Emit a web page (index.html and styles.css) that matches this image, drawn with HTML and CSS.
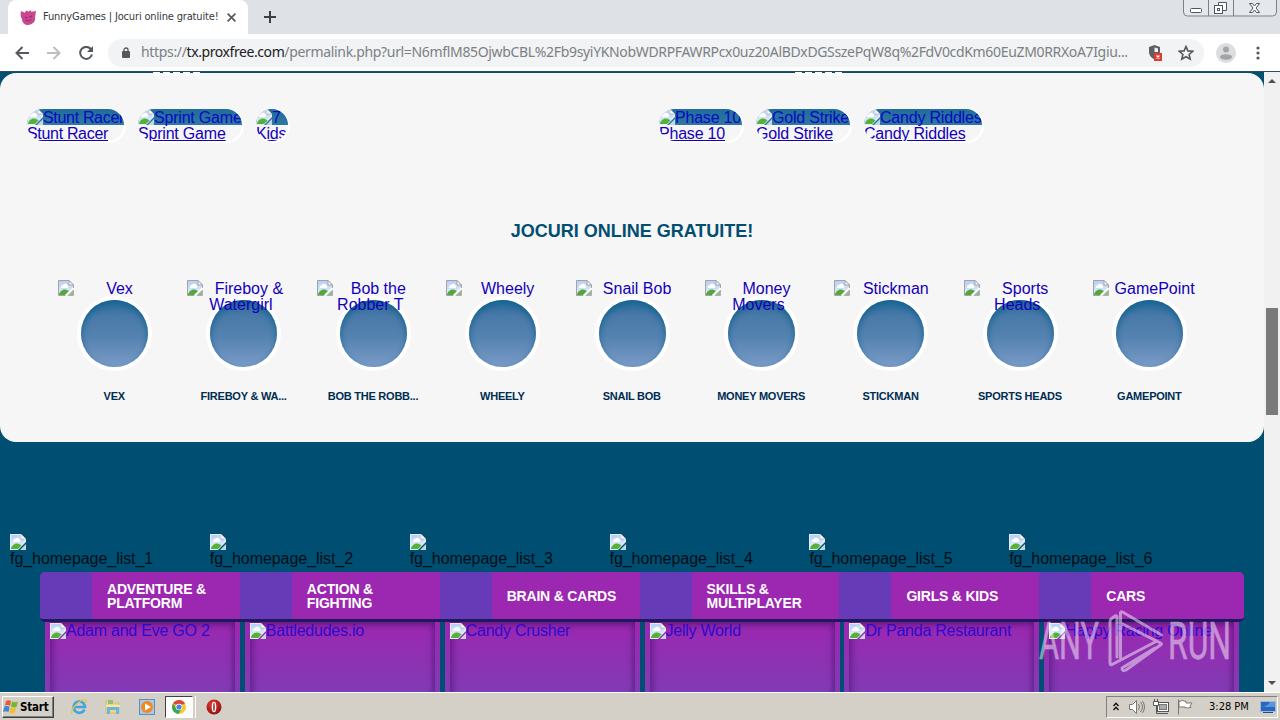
FILE: index.html
```html
<!DOCTYPE html>
<html lang="ro">
<head>
<meta charset="utf-8">
<title>FunnyGames | Jocuri online gratuite!</title>
<link rel="stylesheet" href="styles.css">
</head>
<body>
<svg class="defs" width="0" height="0" aria-hidden="true">
  <linearGradient id="sky" x1="0" y1="0" x2="0" y2="1"><stop offset="0" stop-color="#b6cff5"/><stop offset="1" stop-color="#e6f0fc"/></linearGradient>
  <radialGradient id="red" cx=".4" cy=".3" r=".8"><stop offset="0" stop-color="#e33a30"/><stop offset="1" stop-color="#880d0d"/></radialGradient>
  <symbol id="broken" viewBox="0 0 16 16">
    <path d="M.5.5H11l4.500 4.500V8L7.500 15.500H.5z" fill="url(#sky)" stroke="#a3a3a3"/>
    <path d="M11 .5V5h4.500z" fill="#fff" stroke="#a3a3a3"/>
    <path d="M3 7a2 2 0 0 1 2-2 2.500 2.500 0 0 1 4.500.5A1.500 1.500 0 0 1 9.500 8H3z" fill="#fff"/>
    <path d="M1 15c0-3 3-5.500 6-5.500 2 0 3.500 1 4 2L8 15z" fill="#54a83a"/>
    <path d="M15.500 10v5.500H10z" fill="#8fb98a" stroke="#a3a3a3" stroke-width=".7"/>
    <path d="M7.500 15.500l8-7.500" stroke="#fff" stroke-width="1.600"/>
  </symbol>
  <symbol id="brokendark" viewBox="0 0 16 16">
    <path d="M0 0H11l5 5V8L8 16H0z" fill="#e3edfb"/>
    <path d="M1 1h9v4h4v3l-6 6H1z" fill="url(#sky)"/>
    <path d="M11 0V5h5z" fill="#fff" stroke="#a3a3a3" stroke-width=".6"/>
    <path d="M3 7a2 2 0 0 1 2-2 2.500 2.500 0 0 1 4.500.5A1.500 1.500 0 0 1 9.500 8H3z" fill="#fff"/>
    <path d="M1 15c0-3 3-5.500 6-5.500 2 0 3.500 1 4.500 2L8 15z" fill="#54b336"/>
    <path d="M16 10v6H10z" fill="#c4d6df"/>
  </symbol>
</svg>

<header class="tabstrip">
  <div class="tab">
    <svg class="favicon" viewBox="0 0 18 18"><path d="M1 2l4 2q1-3 3-2l1 1 2-2 1 2 5-1-1 6q1 8-7 9Q2 17 2 10 0 8 1 2z" fill="#c9478f"/><path d="M5 8l3 1-1 1zM13 7l-3 1 1 1z" fill="#702060"/><path d="M6 12q3 2 6-1" fill="none" stroke="#8d2a72"/></svg>
    <span class="tab-title">FunnyGames | Jocuri online gratuite!</span>
    <svg class="tab-close" viewBox="0 0 8 8"><path d="M.5.5l7 7M7.500.5l-7 7" stroke="#55595e" stroke-width="1.500"/></svg>
  </div>
  <svg class="newtab" viewBox="0 0 12 12"><path d="M6 0v12M0 6h12" stroke="#3c4043" stroke-width="2"/></svg>
  <svg class="winctl" viewBox="0 0 94 18"><path d="M.5 0v12q0 4 4 4h85q4 0 4-4V0M25.500 0v16M50.500 0v16" fill="#e4e7ec" stroke="#7b818b"/><rect x="7.500" y="8.500" width="11" height="4" rx="1" fill="#fff" stroke="#50555e"/><path d="M35.500 2.500h8v8h-8z" fill="#fff" stroke="#50555e"/><rect x="31.500" y="5.500" width="8" height="8" fill="#fff" stroke="#50555e"/><rect x="34.500" y="8.500" width="2" height="2" fill="none" stroke="#50555e"/><path d="M66.500 3.500h3l2 2.500 2-2.500h3L73 8l3.500 4.500h-3l-2-2.500-2 2.500h-3L70 8z" fill="#fff" stroke="#50555e"/></svg>
</header>

<nav class="toolbar">
  <svg class="nav-icon" viewBox="0 0 14 14"><path d="M14 7H1.500M7.500 1l-6 6 6 6" fill="none" stroke="#55595d" stroke-width="2"/></svg>
  <svg class="nav-icon" viewBox="0 0 14 14"><path d="M0 7h12.500M6.500 1l6 6-6 6" fill="none" stroke="#bcbec1" stroke-width="2"/></svg>
  <svg class="nav-icon" viewBox="0 0 14 14"><path d="M11.800 3A6 6 0 1 0 13 8.500" fill="none" stroke="#55595d" stroke-width="2"/><path d="M14 0v6H8z" fill="#55595d"/></svg>
  <div class="omnibox">
    <svg class="lock" viewBox="0 0 8 11"><rect y="4" width="8" height="7" rx="1" fill="#55595d"/><path d="M2 5V3a2 2 0 0 1 4 0v2" fill="none" stroke="#55595d" stroke-width="1.300"/></svg>
    <span class="url">https://<b>tx.proxfree.com</b>/permalink.php?url=N6mflM85OjwbCBL%2Fb9syiYKNobWDRPFAWRPcx0uz20AlBDxDGSszePqW8q%2FdV0cdKm60EuZM0RRXoA7Igiu...</span>
    <svg class="shield" viewBox="0 0 14 16"><path d="M6.500 0L12 2v5q0 5-5.500 7.500Q1 12 1 7V2z" fill="#5b6066"/><path d="M6.500 2.500L10 3.500V7H6.500z" fill="#f1f3f4"/><rect x="6" y="8" width="8" height="8" fill="#dd3c35"/><path d="M8.500 10.500l3 3M11.500 10.500l-3 3" stroke="#fff" stroke-width="1.300"/></svg>
    <svg class="star" viewBox="0 0 16 16"><path d="M8 1.500l1.900 4.400 4.800.4-3.600 3.200 1.100 4.700L8 11.700l-4.200 2.500 1.100-4.700L1.300 6.300l4.800-.4z" fill="none" stroke="#55595d" stroke-width="1.600"/></svg>
  </div>
  <svg class="avatar" viewBox="0 0 20 20"><circle cx="10" cy="10" r="10" fill="#dcdddf"/><circle cx="10" cy="6.500" r="3" fill="#a2a4a7"/><ellipse cx="10" cy="14" rx="6" ry="2.700" fill="#a2a4a7"/></svg>
  <svg class="dots" viewBox="0 0 4 14"><circle cx="2" cy="2" r="1.600" fill="#55595d"/><circle cx="2" cy="7" r="1.600" fill="#55595d"/><circle cx="2" cy="12" r="1.600" fill="#55595d"/></svg>
</nav>

<div class="viewport">
  <main class="page">
    <section class="panel">
      <div class="edges"><i></i><i></i></div>
      <div class="pills">
        <div class="pill-group">
          <a class="pill w97"><span class="pic"><svg><use href="#brokendark"/></svg><span>Stunt Racer</span></span><u>Stunt Racer</u></a>
          <a class="pill w104"><span class="pic"><svg><use href="#brokendark"/></svg><span>Sprint Game</span></span><u>Sprint Game</u></a>
          <a class="pill w32"><span class="pic"><svg><use href="#brokendark"/></svg><span>7</span></span><u>Kids</u></a>
        </div>
        <div class="pill-group">
          <a class="pill w83"><span class="pic"><svg><use href="#brokendark"/></svg><span>Phase 10</span></span><u>Phase 10</u></a>
          <a class="pill w94"><span class="pic"><svg><use href="#brokendark"/></svg><span>Gold Strike</span></span><u>Gold Strike</u></a>
          <a class="pill w118"><span class="pic"><svg><use href="#brokendark"/></svg><span>Candy Riddles</span></span><u>Candy Riddles</u></a>
        </div>
      </div>
      <h1>JOCURI ONLINE GRATUITE!</h1>
      <div class="circles">
        <div class="game"><span class="alt"><svg><use href="#broken"/></svg><span>Vex</span></span><i class="disc"></i><b>VEX</b></div>
        <div class="game"><span class="alt"><svg><use href="#broken"/></svg><span>Fireboy &amp;<br><em>Watergirl</em></span></span><i class="disc"></i><b>FIREBOY &amp; WA...</b></div>
        <div class="game"><span class="alt"><svg><use href="#broken"/></svg><span>Bob the<br><em>Robber T</em></span></span><i class="disc"></i><b>BOB THE ROBB...</b></div>
        <div class="game"><span class="alt"><svg><use href="#broken"/></svg><span>Wheely</span></span><i class="disc"></i><b>WHEELY</b></div>
        <div class="game"><span class="alt"><svg><use href="#broken"/></svg><span>Snail Bob</span></span><i class="disc"></i><b>SNAIL BOB</b></div>
        <div class="game"><span class="alt"><svg><use href="#broken"/></svg><span>Money<br><em>Movers</em></span></span><i class="disc"></i><b>MONEY MOVERS</b></div>
        <div class="game"><span class="alt"><svg><use href="#broken"/></svg><span>Stickman</span></span><i class="disc"></i><b>STICKMAN</b></div>
        <div class="game"><span class="alt"><svg><use href="#broken"/></svg><span>Sports<br><em>Heads</em></span></span><i class="disc"></i><b>SPORTS HEADS</b></div>
        <div class="game"><span class="alt"><svg><use href="#broken"/></svg><span>GamePoint</span></span><i class="disc"></i><b>GAMEPOINT</b></div>
      </div>
    </section>

    <div class="listalts">
      <div><svg><use href="#brokendark"/></svg>fg_homepage_list_1</div>
      <div><svg><use href="#brokendark"/></svg>fg_homepage_list_2</div>
      <div><svg><use href="#brokendark"/></svg>fg_homepage_list_3</div>
      <div><svg><use href="#brokendark"/></svg>fg_homepage_list_4</div>
      <div><svg><use href="#brokendark"/></svg>fg_homepage_list_5</div>
      <div><svg><use href="#brokendark"/></svg>fg_homepage_list_6</div>
    </div>
    <div class="catbar">
      <div><span>ADVENTURE &amp;<br>PLATFORM</span></div>
      <div><span>ACTION &amp;<br>FIGHTING</span></div>
      <div><span>BRAIN &amp; CARDS</span></div>
      <div><span>SKILLS &amp;<br>MULTIPLAYER</span></div>
      <div><span>GIRLS &amp; KIDS</span></div>
      <div><span>CARS</span></div>
    </div>
    <div class="cards">
      <div class="card"><a><svg><use href="#brokendark"/></svg>Adam and Eve GO 2</a></div>
      <div class="card"><a><svg><use href="#brokendark"/></svg>Battledudes.io</a></div>
      <div class="card"><a><svg><use href="#brokendark"/></svg>Candy Crusher</a></div>
      <div class="card"><a><svg><use href="#brokendark"/></svg>Jelly World</a></div>
      <div class="card"><a><svg><use href="#brokendark"/></svg>Dr Panda Restaurant</a></div>
      <div class="card"><a><svg><use href="#brokendark"/></svg>Happy Racing Online</a></div>
    </div>
  </main>
  <aside class="scrollbar">
    <svg class="arrow" viewBox="0 0 8 4"><path d="M0 4l4-4 4 4z" fill="#505050"/></svg>
    <i class="thumb"></i>
    <svg class="arrow" viewBox="0 0 8 4"><path d="M0 0l4 4 4-4z" fill="#505050"/></svg>
  </aside>
  <svg class="watermark" viewBox="0 0 200 66">
    <g fill="#fff" stroke="#fff" stroke-width=".5" font-family="Roboto" font-size="52">
      <text x="3" y="51" textLength="60" lengthAdjust="spacingAndGlyphs">ANY</text>
      <text x="132" y="51" textLength="63" lengthAdjust="spacingAndGlyphs">RUN</text>
    </g>
    <path d="M81 49V9q0-2-2-1l-4 3q-1 1-1 3v41q0 3 3 1l44-23M84.500 50V5q0-2 2-1l39 23M84.500 15l40 20q2 1 0 2L90 62q-4 2-4-2l33-20" fill="none" stroke="#fff" stroke-width="3" stroke-linejoin="round" stroke-linecap="round"/>
  </svg>
</div>

<footer class="taskbar">
  <div class="start"><svg viewBox="0 0 16 16"><path d="M3 2q3-1.500 5 0L7 7Q5 5.500 2 6.500z" fill="#e95c2a"/><path d="M9 2.500q3 1.500 6 0L13.500 8q-3 1-5.500-.5z" fill="#78b82a"/><path d="M1.500 7.500q3-1 5 .5l-1 5q-3-1.500-5.500 0z" fill="#3f83d8"/><path d="M7.500 8.500q3 1.500 5.500.5l-1.500 5q-3 1-5-.5z" fill="#f5bd20"/></svg>Start</div>
  <div class="quick">
    <svg viewBox="0 0 18 18"><path d="M14.500 11.500A5.700 5.700 0 1 1 15 9H5" fill="none" stroke="#41a5df" stroke-width="2.600"/><path d="M2 16Q0 12 7 6q7-6 9-4 1 1-1 4" fill="none" stroke="#e5c84b" stroke-width="1.300"/></svg>
    <svg viewBox="0 0 18 18"><path d="M2 3h5l1 2h7v10H2z" fill="#f2d67c" stroke="#ceb35a" stroke-width=".6"/><path d="M4 2h5v4H4z" fill="#8fc17c"/><path d="M3 16V9h12v7h-3v-4H6v4z" fill="#69b5e3"/><path d="M2 7h14v2H2z" fill="#f7e6a2"/></svg>
    <svg viewBox="0 0 18 18"><rect x="1.500" y="1.500" width="15" height="15" fill="#a8c9e9" stroke="#5b8fc4"/><circle cx="9" cy="9" r="6" fill="#f08a1b"/><path d="M7 5.500l6 3.500-6 3.500z" fill="#fff"/></svg>
    <span class="active"><svg viewBox="0 0 14 14"><circle cx="7" cy="7" r="7" fill="#f6c830"/><path d="M1 3.500a7 7 0 0 1 12 0L7 6z" fill="#dc4636"/><path d="M1 3.500a7 7 0 0 0 5.500 10.500L9 9.500 4 8z" fill="#37a25a"/><circle cx="7" cy="7" r="3.300" fill="#fff"/><circle cx="7" cy="7" r="2.600" fill="#4384ea"/></svg></span>
    <svg class="opera" viewBox="0 0 18 18"><circle cx="9" cy="9" r="7.500" fill="url(#red)"/><ellipse cx="9" cy="9" rx="2.300" ry="5.300" fill="#fff"/><ellipse cx="9" cy="9" rx=".8" ry="4.300" fill="#a02020"/></svg>
  </div>
  <div class="tray">
    <svg class="chev" viewBox="0 0 6 9"><path d="M.5 4L3 1.300 5.500 4M.5 8L3 5.300 5.500 8" fill="none" stroke="#111" stroke-width="1.400"/></svg>
    <svg class="ti vol" viewBox="0 0 16 16"><path d="M.5 5.500h3l4-4v13l-4-4h-3z" fill="#fff" stroke="#777"/><path d="M9.500 5q2 3 0 6M11.500 3q4 5 0 10M13.500 2q4 6 0 12" fill="none" stroke="#777"/></svg>
    <svg class="ti net" viewBox="0 0 16 16"><rect x="4.500" y="3.500" width="11" height="9" fill="#fff" stroke="#555"/><rect x="6.500" y="5.500" width="7" height="5" fill="#aaa" stroke="#777"/><path d="M6 14.500h9" stroke="#555"/><path d="M3.500 6v8.500H7" fill="none" stroke="#555"/><path d="M.5 2.500h5v4h-5zM1.500 0v2M4.500 0v2" fill="#fff" stroke="#555"/></svg>
    <svg class="ti flag" viewBox="0 0 16 16"><path d="M1.500.5v15M2 2.500q3-2 7 0v1.500h6l-2 3 1 1.500q-4 1-6 0V8H2z" fill="#fff" stroke="#777"/></svg>
    <span class="clock">3:28 PM</span>
    <svg class="ti desk" viewBox="0 0 16 14"><rect x=".5" y="1.500" width="15" height="10" fill="#2a66be" stroke="#9db9dc"/><path d="M1 7q6 0 9-5h5v5z" fill="#5a94dd"/><path d="M3 12.500h10" stroke="#234b84"/></svg>
  </div>
</footer>
</body>
</html>
```
FILE: styles.css
```css
* { box-sizing: border-box; }
body { margin: 0; width: 1280px; height: 720px; overflow: hidden; display: flex; flex-direction: column; background: #fff; font: 16px/16px "Liberation Sans", Arial, sans-serif; }
svg { display: block; flex: none; }
.defs { position: absolute; }
i, em { font-style: normal; }

.tabstrip { height: 34px; flex: none; background: #dee1e6; display: flex; align-items: flex-start; padding-left: 8px; }
.tab { width: 240px; height: 34px; background: #fff; border-radius: 8px 8px 0 0; display: flex; align-items: center; padding-left: 12px; }
.favicon { width: 17px; height: 17px; }
.tab-title { width: 178px; margin-left: 6px; font: 11px/16px "DejaVu Sans Condensed", "DejaVu Sans", sans-serif; font-stretch: condensed; letter-spacing: -.16px; white-space: nowrap; color: #36393d; }
.tab-close { width: 9px; height: 9px; margin-left: 6px; }
.newtab { width: 12px; height: 12px; margin: 11px 0 0 16px; }
.winctl { width: 94px; height: 18px; margin: 0 3px 0 auto; }

.toolbar { height: 38px; flex: none; display: flex; align-items: center; padding-left: 15px; border-bottom: 1px solid #294c5e; }
.nav-icon { width: 14px; height: 14px; margin-right: 18px; }
.nav-icon:nth-child(3) { margin-right: 15px; }
.omnibox { width: 1096px; height: 28px; border-radius: 14px; background: #f1f3f4; display: flex; align-items: center; padding-left: 14px; }
.lock { width: 8px; height: 11px; }
.url { width: 990px; margin-left: 11px; font: 14px/20px "Noto Sans", sans-serif; letter-spacing: -.335px; white-space: nowrap; color: #7c8084; }
.url b { font-weight: 400; letter-spacing: -.42px; color: #202124; }
.url { position: relative; top: -1px; }
.shield { width: 14px; height: 16px; margin-left: 17px; }
.star { width: 16px; height: 16px; margin-left: 16px; }
.avatar { width: 20px; height: 20px; margin-left: 12px; }
.dots { width: 4px; height: 14px; margin-left: 20px; }

.viewport { height: 620px; flex: none; display: flex; position: relative; overflow: hidden; }
.page { width: 1264px; background: #004e71; padding-top: 1px; overflow: hidden; }
.panel { height: 369px; border-radius: 16px; background: #f6f6f6; }
.edges { height: 36px; display: flex; padding-left: 153px; gap: 594px; }
.edges i { width: 48px; height: 4px; margin-top: -1px; background: repeating-linear-gradient(90deg, #fff 0 7px, transparent 7px 10px); }
.pills { display: flex; padding-left: 27px; height: 112px; }
.pill-group { display: flex; gap: 14px; width: 632px; flex: none; }
.pill { height: 32px; border-radius: 16px; overflow: hidden; box-shadow: 1px 1px 0 1px #fff; color: #1400b8; white-space: nowrap; letter-spacing: -.2px; }
.pic { display: flex; height: 16px; background: linear-gradient(#1f6d98, #2f78a4); color: #0808c4; letter-spacing: -.2px; }
.pic svg, .alt svg, .listalts svg, .card svg { width: 16px; height: 16px; }
.pic > span { padding-top: 1px; }
.pill u { display: block; height: 16px; line-height: 17px; }
.w97 { width: 97px; } .w104 { width: 104px; } .w32 { width: 32px; } .w83 { width: 83px; } .w94 { width: 94px; } .w118 { width: 118px; }
.w97 .pic, .w97 u { letter-spacing: -.32px; }
h1 { margin: 0; font-size: 18px; line-height: 20px; text-align: center; color: #004e71; height: 59px; }
.circles { display: flex; padding-left: 50px; }
.game { width: 129.400px; flex: none; height: 130px; display: flex; flex-direction: column; align-items: center; position: relative; }
.alt { position: absolute; z-index: 1; left: 8px; top: 0; width: 113px; display: flex; color: #1400b8; white-space: nowrap; }
.alt > span { flex: 1; text-align: center; padding: 1px 6px 0 0; }
.alt em { position: relative; left: -8px; }
.disc { width: 67px; height: 67px; margin: 20px .5px 0 0; border-radius: 50%; background: linear-gradient(#2a6c9b 0, #4a7aa9 25%, #5482b0 55%, #7a9bc8 100%); box-shadow: 0 0 0 4px #fff, inset 0 4px 6px #176592; }
.game b { margin: 21px 1px 0 0; font: bold 11px/16px "Liberation Sans", Arial, sans-serif; letter-spacing: -.24px; color: #002d52; white-space: nowrap; }

.listalts { margin-top: 92px; padding-left: 10px; display: flex; height: 38px; }
.listalts div { width: 199.850px; line-height: 17px; letter-spacing: -.05px; color: #001018; }
.catbar { width: 1204px; height: 50px; margin-left: 40px; display: flex; border-radius: 5px; overflow: hidden; background: #9c27b0; border-bottom: 3px solid #1d195c; }
.catbar div { width: 199.850px; flex: none; padding-left: 67px; background: linear-gradient(90deg, #673ab7 52px, transparent 52px); display: flex; align-items: center; color: #fff; font: bold 14px/14px "Liberation Sans", Arial, sans-serif; letter-spacing: -.2px; }
.cards { display: flex; padding-left: 45px; gap: 4.850px; height: 80px; }
.card { width: 195px; flex: none; padding: 0 5px; background: linear-gradient(#9c27b0, #813bb4 70px); }
.card a { display: flex; height: 80px; padding-top: 1px; color: #2c0bcc; white-space: nowrap; letter-spacing: -.24px; box-shadow: inset 3px 3px 6px rgba(65,15,105,.5), inset -3px 0 5px rgba(65,15,105,.4); }
.scrollbar { width: 16px; background: #f1f1f1; display: flex; flex-direction: column; align-items: center; }
.arrow { width: 8px; height: 4px; margin: 7px 0; }
.thumb { width: 12px; height: 107px; background: #7a7a7a; margin: 218px 0 auto; }
.watermark { position: absolute; left: 1036px; top: 536px; width: 200px; height: 66px; opacity: .48; }

.taskbar { height: 28px; flex: none; background: #d4d0c8; border-top: 1px solid #fff; display: flex; align-items: center; padding-left: 2px; }
.start { width: 52px; height: 22px; border: 1px solid; border-color: #fff #404040 #404040 #fff; box-shadow: inset -1px -1px #808080; display: flex; align-items: center; gap: 1px; font: bold 11.500px/16px "DejaVu Sans Condensed", "DejaVu Sans", sans-serif; font-stretch: condensed; letter-spacing: -.2px; color: #000; }
.start svg { width: 16px; height: 16px; }
.quick { display: flex; align-items: center; padding-left: 16px; gap: 16px; }
.quick > svg { width: 18px; height: 18px; }
.active { width: 28px; height: 22px; margin-left: -7px; background: #fff; border: 1px solid; border-color: #404040 #fff #fff #404040; box-shadow: 2px 0 #d4d0c8, 3px 0 #fff; display: flex; justify-content: center; align-items: center; }
.active svg { width: 14px; height: 14px; }
.quick .opera { margin-left: -4px; }
.tray { margin: 0 2px 0 auto; width: 172px; height: 22px; border: 1px solid; border-color: #808080 #fff #fff #808080; display: flex; align-items: center; padding-left: 6px; }
.chev { width: 6px; height: 9px; }
.ti { width: 16px; height: 16px; }
.vol { margin-left: 10px; } .net { margin-left: 8px; } .flag { margin-left: 8px; }
.clock { width: 51px; margin-left: 16px; font: 11px/16px "DejaVu Sans Condensed", "DejaVu Sans", sans-serif; font-stretch: condensed; letter-spacing: 0; color: #000; white-space: nowrap; }
.desk { height: 14px; }
```
